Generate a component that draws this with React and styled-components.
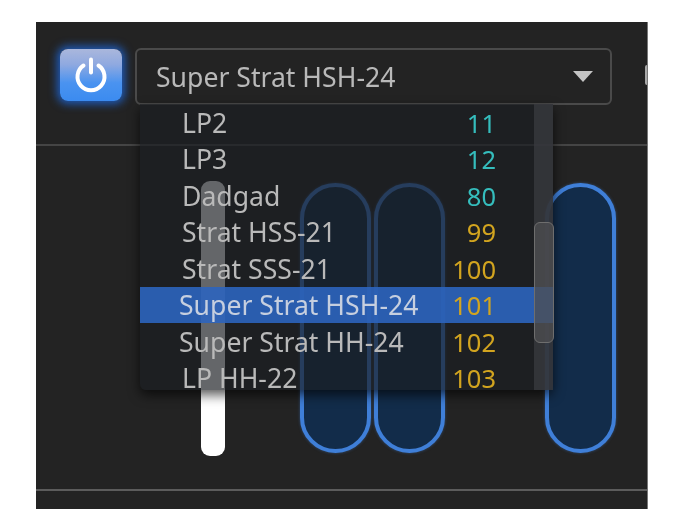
import styled, { createGlobalStyle } from "styled-components";

const presets = [
  { name: "LP2", num: 11, bank: "teal" },
  { name: "LP3", num: 12, bank: "teal" },
  { name: "Dadgad", num: 80, bank: "teal" },
  { name: "Strat HSS-21", num: 99, bank: "amber" },
  { name: "Strat SSS-21", num: 100, bank: "amber" },
  { name: "Super Strat HSH-24", num: 101, bank: "amber", selected: true, shifted: true },
  { name: "Super Strat HH-24", num: 102, bank: "amber", shifted: true },
  { name: "LP HH-22", num: 103, bank: "amber" },
];

const GlobalStyle = createGlobalStyle`
  html, body {
    margin: 0;
    padding: 0;
    background: #fff;
  }
  * {
    box-sizing: border-box;
  }
`;

const Panel = styled.div`
  position: relative;
  width: 612px;
  height: 487px;
  margin: 22px 0 0 36px;
  background: #232323;
  border-right: 1px solid #777;
  font-family: "Noto Sans", sans-serif;
  overflow: hidden;
  filter: blur(0.5px);
`;

const Header = styled.div`
  display: flex;
  align-items: flex-start;
  height: 124px;
  padding: 26px 0 0 24px;
  border-bottom: 2px solid #454545;
`;

const PowerButton = styled.button`
  flex: none;
  display: flex;
  align-items: center;
  justify-content: center;
  width: 62px;
  height: 52px;
  margin-top: 1px;
  padding: 0;
  border: none;
  border-radius: 8px;
  background: linear-gradient(#aab7dc 0%, #8fa9e0 30%, #4a93f0 65%, #3b8bf0 100%);
  box-shadow: 0 0 9px 3px rgba(30, 110, 235, 0.75);
`;

const SelectBox = styled.div`
  flex: none;
  display: flex;
  align-items: center;
  justify-content: space-between;
  width: 477px;
  height: 57px;
  margin-left: 13px;
  padding: 0 17px 0 19px;
  border: 2px solid #4a4a4a;
  border-radius: 6px;
  background: #232323;
  color: #b9b9b9;
  font-size: 26.6px;
`;

const Caret = styled.span`
  width: 0;
  height: 0;
  border-left: 10px solid transparent;
  border-right: 10px solid transparent;
  border-top: 11px solid #c4c4c4;
`;

const EdgeMarker = styled.span`
  flex: none;
  width: 3px;
  height: 20px;
  margin: 17px 0 0 33px;
  background: #a9a9a9;
  border-radius: 2px 0 0 2px;
`;

const Body = styled.div`
  display: flex;
  align-items: flex-start;
  height: 345px;
  padding: 35px 0 0 165px;
  border-bottom: 2px solid #5c5c5c;
`;

const Fader = styled.div`
  flex: none;
  width: 24px;
  height: 275px;
  border-radius: 9px;
  background: #fff;
`;

const Pill = styled.div`
  flex: none;
  width: 71px;
  height: 270px;
  margin: 2px 0 0 ${(p) => p.$gap}px;
  border: 4px solid #3f7fd8;
  border-radius: 36px;
  background: #122c4a;
  box-shadow: 0 0 3px rgba(63, 127, 216, 0.5);
`;

const Dropdown = styled.div`
  position: absolute;
  top: 82px;
  left: 104px;
  width: 413px;
  height: 286px;
  display: flex;
  background: rgba(27, 29, 34, 0.68);
  border-radius: 0 0 6px 6px;
  box-shadow: 0 5px 12px rgba(0, 0, 0, 0.65);
`;

const List = styled.div`
  flex: 1;
  min-width: 0;
`;

const Row = styled.div`
  display: flex;
  align-items: center;
  justify-content: space-between;
  width: ${(p) => (p.$selected ? "413px" : "100%")};
  height: 36.5px;
  padding: 1px ${(p) => (p.$selected ? 57 : 38)}px 0 ${(p) => (p.$shifted ? 39 : 42)}px;
  background: ${(p) => (p.$selected ? "rgba(44, 100, 190, 0.9)" : "transparent")};
  color: ${(p) => (p.$selected ? "#c6cfdf" : "#b9b9b9")};
  font-size: 26.6px;
  line-height: 24px;
  white-space: nowrap;
  ${(p) => p.$selected && "position: relative; z-index: 1;"}
`;

const Num = styled.span`
  color: ${(p) => (p.$bank === "teal" ? "#35bdbd" : "#d2a41f")};
  font-size: 25.5px;
`;

const Track = styled.div`
  position: relative;
  flex: none;
  width: 19px;
  background: rgba(56, 58, 62, 0.8);
`;

const Thumb = styled.div`
  position: absolute;
  z-index: 2;
  top: 118px;
  left: 0;
  width: 20px;
  height: 121px;
  border: 1px solid #6e6e6e;
  border-radius: 6px;
  background: rgba(78, 78, 80, 0.75);
`;

const PowerIcon = () => (
  <svg width="36" height="36" viewBox="0 0 36 36" fill="none" stroke="#fff" strokeWidth="4" strokeLinecap="round">
    <path d="M10.5 8.5a13.5 13.5 0 1 0 15 0" />
    <path d="M18 2.5v13" />
  </svg>
);

export default function App() {
  return (
    <>
      <GlobalStyle />
      <Panel>
        <Header>
          <PowerButton>
            <PowerIcon />
          </PowerButton>
          <SelectBox>
            Super Strat HSH-24
            <Caret />
          </SelectBox>
          <EdgeMarker />
        </Header>
        <Body>
          <Fader />
          <Pill $gap={75} />
          <Pill $gap={3} />
          <Pill $gap={100} />
        </Body>
        <Dropdown>
          <List>
            {presets.map((p) => (
              <Row key={p.num} $selected={p.selected} $shifted={p.shifted}>
                {p.name}
                <Num $bank={p.bank}>{p.num}</Num>
              </Row>
            ))}
          </List>
          <Track>
            <Thumb />
          </Track>
        </Dropdown>
      </Panel>
    </>
  );
}
